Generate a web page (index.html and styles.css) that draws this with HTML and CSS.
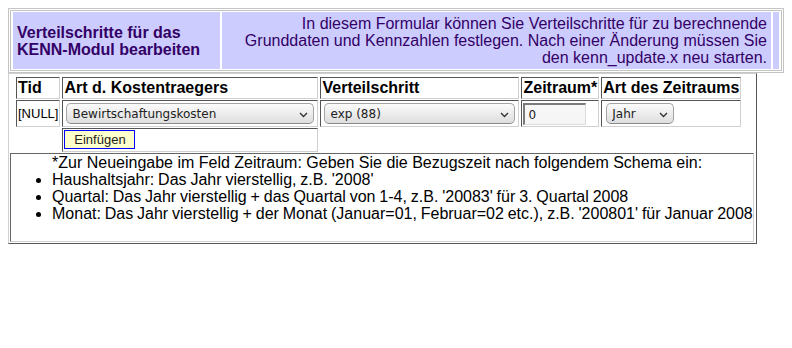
FILE: index.html
```html
<!DOCTYPE html>
<html lang="de">
<head>
    <meta charset="UTF-8">
    <title>Verteilschritte bearbeiten</title>
    <link rel="stylesheet" href="styles.css">
</head>
<body>
    <!-- Kopfbereich -->
    <div class="intro">
        <table class="intro-table">
            <tr>
                <td class="intro-title">Verteilschritte für das<br>KENN-Modul bearbeiten</td>
                <td class="intro-text">In diesem Formular können Sie Verteilschritte für zu berechnende<br>Grunddaten und Kennzahlen festlegen. Nach einer Änderung müssen Sie<br>den kenn_update.x neu starten.</td>
                <td class="intro-end"></td>
            </tr>
        </table>
    </div>

    <!-- Formular -->
    <form class="panel">
        <table class="steps">
            <tr>
                <th>Tid</th>
                <th>Art d. Kostentraegers</th>
                <th>Verteilschritt</th>
                <th>Zeitraum*</th>
                <th>Art des Zeitraums</th>
            </tr>
            <tr>
                <td class="small">[NULL]</td>
                <td>
                    <span class="select-wrap">
                        <select class="sel sel-kt">
                            <option>Bewirtschaftungskosten</option>
                        </select>
                        <svg class="chevron" width="9" height="6" viewBox="0 0 9 6"><path d="M1 1 L4.5 4.5 L8 1" fill="none" stroke="#333" stroke-width="1.4"/></svg>
                    </span>
                </td>
                <td>
                    <span class="select-wrap">
                        <select class="sel sel-vs">
                            <option>exp (88)</option>
                        </select>
                        <svg class="chevron" width="9" height="6" viewBox="0 0 9 6"><path d="M1 1 L4.5 4.5 L8 1" fill="none" stroke="#333" stroke-width="1.4"/></svg>
                    </span>
                </td>
                <td><input class="field" type="text" value="0"></td>
                <td>
                    <span class="select-wrap">
                        <select class="sel sel-jahr">
                            <option>Jahr</option>
                        </select>
                        <svg class="chevron" width="9" height="6" viewBox="0 0 9 6"><path d="M1 1 L4.5 4.5 L8 1" fill="none" stroke="#333" stroke-width="1.4"/></svg>
                    </span>
                </td>
            </tr>
            <tr>
                <td class="blank"></td>
                <td><button class="btn-add" type="button">Einfügen</button></td>
                <td class="blank" colspan="3"></td>
            </tr>
        </table>

        <div class="note">
            <p>*Zur Neueingabe im Feld Zeitraum: Geben Sie die Bezugszeit nach folgendem Schema ein:</p>
            <ul>
                <li>Haushaltsjahr: Das Jahr vierstellig, z.B. '2008'</li>
                <li>Quartal: Das Jahr vierstellig + das Quartal von 1-4, z.B. '20083' für 3. Quartal 2008</li>
                <li>Monat: Das Jahr vierstellig + der Monat (Januar=01, Februar=02 etc.), z.B. '200801' für Januar 2008</li>
            </ul>
        </div>
    </form>
</body>
</html>
```

FILE: styles.css
```css
* {
    box-sizing: border-box;
}

body {
    margin: 8px;
    font-family: "Liberation Sans", Arial, sans-serif;
    font-size: 16px;
    line-height: 17px;
    color: #000;
    background: #fff;
}

/* Kopfbereich */

.intro {
    width: 776px;
    padding: 1px;
    border: 1px solid #c4c4c4;
}

.intro-table {
    width: 100%;
    border: 1px solid #c4c4c4;
    border-spacing: 2px 1px;
}

.intro-table td {
    background: #ccccff;
    color: #330066;
    padding: 3px 4px;
    vertical-align: middle;
}

.intro-title {
    width: 207px;
    font-weight: bold;
}

.intro-text {
    text-align: right;
}

.intro-table .intro-end {
    width: 6px;
    padding: 0;
}

/* Formular */

.panel {
    width: 749px;
    margin: 0;
    padding: 2px 1px 1px 1px;
    border: 1px solid;
    border-color: #d0d0d0 #555 #555 #d0d0d0;
}

.steps {
    margin-left: 4px;
    border-spacing: 2px 1px;
}

.steps th,
.steps td {
    padding: 1px;
    border: 1px solid;
    border-color: #555 #d0d0d0 #d0d0d0 #555;
    text-align: left;
    vertical-align: middle;
}

.steps th {
    line-height: 18px;
}

.steps .small {
    font-size: 13px;
}

.steps .blank {
    border: none;
}

.select-wrap {
    position: relative;
    display: block;
    width: fit-content;
}

.sel {
    display: block;
    height: 21px;
    margin: 1px 2px;
    padding: 0 0 0 5px;
    appearance: none;
    -webkit-appearance: none;
    font-family: "DejaVu Sans", sans-serif;
    font-size: 12px;
    color: #222;
    background: linear-gradient(#fbfbfb, #dedede);
    border: 1px solid #a4a4a4;
    border-bottom-color: #8a8a8a;
    border-radius: 5px;
}

.sel-kt {
    width: 248px;
}

.sel-vs {
    width: 191px;
}

.sel-jahr {
    width: 68px;
    margin-left: 3px;
}

.chevron {
    position: absolute;
    top: 9px;
    right: 8px;
}

.field {
    display: block;
    width: 63px;
    height: 22px;
    margin: 1px 0 0 0;
    padding: 0 3px;
    font-family: "DejaVu Sans", sans-serif;
    font-size: 12px;
    color: #222;
    background: #f6f6f6;
    border-style: solid;
    border-width: 2px 1px 1px 2px;
    border-color: #7a7a7a #dcdcdc #dcdcdc #7a7a7a;
}

.btn-add {
    display: block;
    width: 71px;
    height: 19px;
    margin: 0 0 1px 0;
    padding: 0;
    font-family: "Liberation Sans", Arial, sans-serif;
    font-size: 13px;
    color: #222;
    background: #ffffcc;
    border: 1px solid #0000ff;
}

.note {
    width: 744px;
    margin: 0;
    border: 1px solid;
    border-color: #666 #d0d0d0 #d0d0d0 #666;
}

.note p {
    margin: 0;
    padding-left: 41px;
}

.note ul {
    margin: 0 0 19px 0;
    padding-left: 41px;
}

.note li {
    white-space: nowrap;
    word-spacing: -0.6px;
}
```
